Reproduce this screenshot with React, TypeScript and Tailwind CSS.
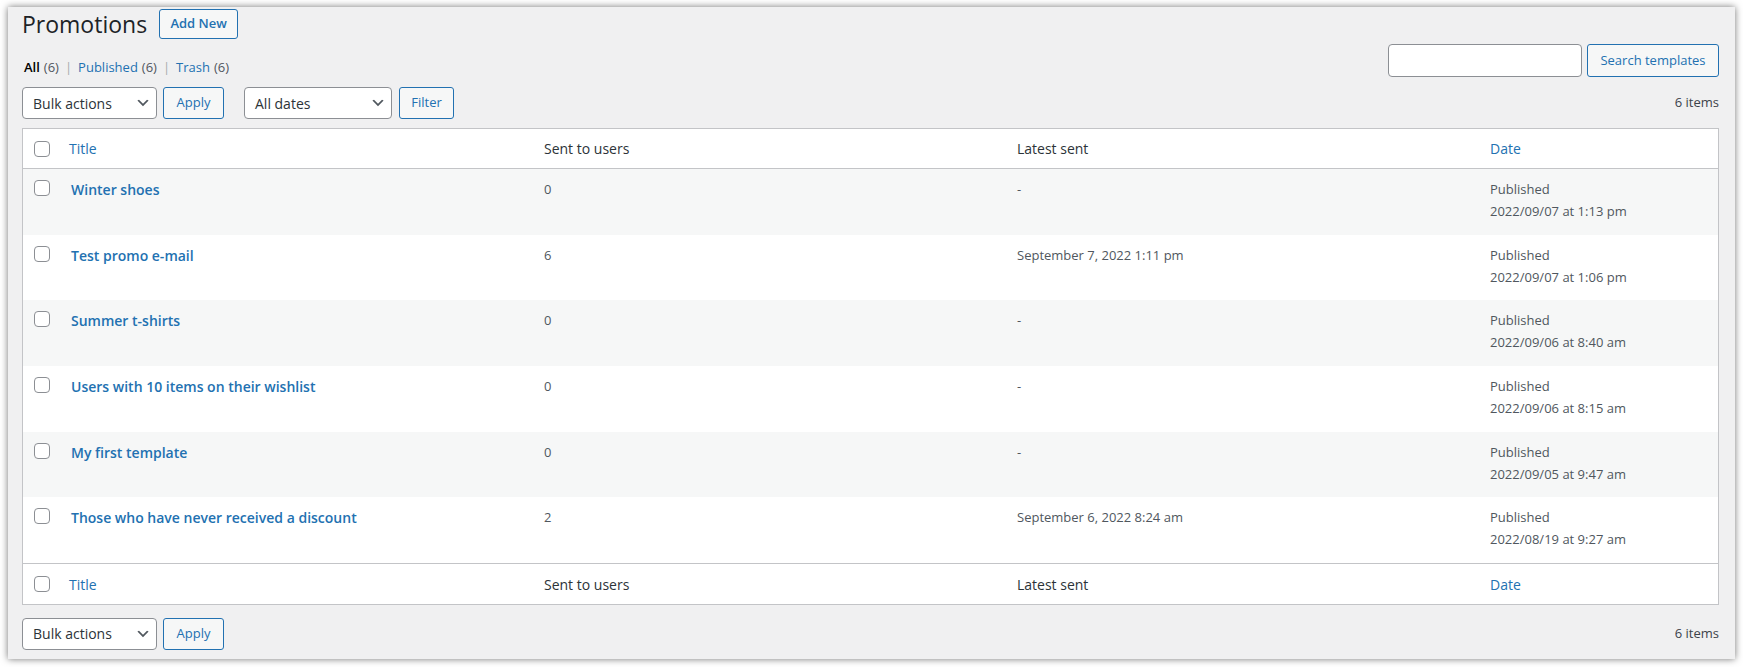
import { ReactNode } from 'react'

const rows = [
  { title: 'Winter shoes', sent: '0', latest: '-', date: '2022/09/07 at 1:13 pm' },
  { title: 'Test promo e-mail', sent: '6', latest: 'September 7, 2022 1:11 pm', date: '2022/09/07 at 1:06 pm' },
  { title: 'Summer t-shirts', sent: '0', latest: '-', date: '2022/09/06 at 8:40 am' },
  { title: 'Users with 10 items on their wishlist', sent: '0', latest: '-', date: '2022/09/06 at 8:15 am' },
  { title: 'My first template', sent: '0', latest: '-', date: '2022/09/05 at 9:47 am' },
  { title: 'Those who have never received a discount', sent: '2', latest: 'September 6, 2022 8:24 am', date: '2022/08/19 at 9:27 am' },
]

function Checkbox() {
  return <span className="block w-4 h-4 rounded-[4px] border border-[#8c8f94] bg-white" />
}

function Chevron() {
  return (
    <svg viewBox="0 0 20 20" className="w-4 h-4 shrink-0" aria-hidden>
      <path d="M5 6l5 5 5-5 2 1-7 7-7-7 2-1z" fill="#50575e" />
    </svg>
  )
}

function Select({ label, width }: { label: string; width: string }) {
  return (
    <div className={`${width} h-[32px] flex items-center justify-between pl-[10px] pr-[5px] bg-white border border-[#8c8f94] rounded-[4px] text-[14px] text-[#2c3338]`}>
      <span>{label}</span>
      <Chevron />
    </div>
  )
}

function Button({ children, width, height = 'h-[32px]' }: { children: ReactNode; width: string; height?: string }) {
  return (
    <button className={`${width} ${height} flex items-center justify-center bg-[#f6f7f7] border border-[#2271b1] rounded-[3px] text-[13px] text-[#2271b1]`}>
      {children}
    </button>
  )
}

function HeadRow({ top }: { top?: boolean }) {
  return (
    <div className={`grid grid-cols-[38px_1fr_1fr_1fr_238px] items-center text-[14px] ${top ? 'h-[40px] border-b' : 'h-[41px] border-t'} border-[#c3c4c7]`}>
      <div className="pl-[11px]"><Checkbox /></div>
      <div className="pl-[8px] text-[#2271b1]">Title</div>
      <div className="pl-[10px] text-[#2c3338]">Sent to users</div>
      <div className="pl-[10px] text-[#2c3338]">Latest sent</div>
      <div className="pl-[10px] text-[#2271b1]">Date</div>
    </div>
  )
}

function BulkNav() {
  return (
    <div className="flex items-center gap-[6px]">
      <Select label="Bulk actions" width="w-[135px]" />
      <Button width="w-[61px]">Apply</Button>
    </div>
  )
}

export default function App() {
  return (
    <div className="w-[1743px] h-[667px] bg-white pt-[7px] pl-[8px] pr-[8px] pb-[8px] font-['Open_Sans','Noto_Sans',sans-serif]">
      <div className="h-full bg-[#f0f0f1] shadow-[0_0_7px_rgba(0,0,0,0.55)] pl-[14px] pr-[16px] pt-[2px]">
        {/* page title */}
        <div className="flex items-center h-[30px]">
          <h1 className="text-[23px] leading-[30px] text-[#1d2327]">Promotions</h1>
          <button className="ml-[12px] w-[79px] h-[30px] bg-[#f6f7f7] border border-[#2271b1] rounded-[3px] text-[13px] font-semibold text-[#2271b1]">
            Add New
          </button>
        </div>

        {/* views + search */}
        <div className="mt-[5px] h-[33px] flex items-start justify-between">
          <div className="mt-[10px] leading-[26px] text-[13px] pl-[2px] flex items-center">
            <span className="font-semibold text-black">All</span>
            <span className="ml-[4px] text-[#50575e]">(6)</span>
            <span className="mx-[6px] text-[#a7aaad]">|</span>
            <span className="text-[#2271b1]">Published</span>
            <span className="ml-[4px] text-[#50575e]">(6)</span>
            <span className="mx-[6px] text-[#a7aaad]">|</span>
            <span className="text-[#2271b1]">Trash</span>
            <span className="ml-[4px] text-[#50575e]">(6)</span>
          </div>
          <div className="flex gap-[5px]">
            <div className="w-[194px] h-[33px] bg-white border border-[#8c8f94] rounded-[4px]" />
            <Button width="w-[132px]" height="h-[33px]">Search templates</Button>
          </div>
        </div>

        {/* top tablenav */}
        <div className="mt-[10px] h-[32px] flex items-center justify-between">
          <div className="flex items-center">
            <BulkNav />
            <div className="ml-[20px] flex items-center gap-[7px]">
              <Select label="All dates" width="w-[148px]" />
              <Button width="w-[55px]">Filter</Button>
            </div>
          </div>
          <span className="text-[13px] text-[#3c434a]">6 items</span>
        </div>

        {/* table */}
        <div className="mt-[9px] bg-white border border-[#c3c4c7]">
          <HeadRow top />
          <div className="grid grid-rows-6 h-[394px]">
            {rows.map((r, i) => (
              <div key={r.title} className={`grid grid-cols-[38px_1fr_1fr_1fr_238px] ${i % 2 === 0 ? 'bg-[#f6f7f7]' : 'bg-white'}`}>
                <div className="pl-[11px] pt-[11px]"><Checkbox /></div>
                <div className="pl-[10px] pt-[10px] leading-[21px] text-[14px] font-semibold text-[#2271b1]">{r.title}</div>
                <div className="pl-[10px] pt-[10px] leading-[21px] text-[13px] text-[#50575e]">{r.sent}</div>
                <div className="pl-[10px] pt-[10px] leading-[21px] text-[13px] text-[#50575e]">{r.latest}</div>
                <div className="pl-[10px] pt-[9px] leading-[22px] text-[13px] text-[#50575e]">
                  <div>Published</div>
                  <div>{r.date}</div>
                </div>
              </div>
            ))}
          </div>
          <HeadRow />
        </div>

        {/* bottom tablenav */}
        <div className="mt-[12px] h-[33px] flex items-center justify-between">
          <BulkNav />
          <span className="text-[13px] text-[#3c434a]">6 items</span>
        </div>
      </div>
    </div>
  )
}
